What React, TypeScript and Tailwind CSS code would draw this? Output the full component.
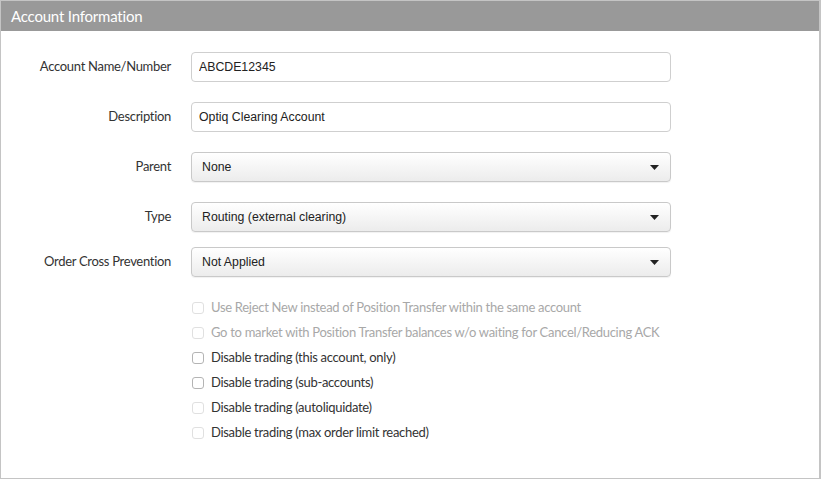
import { ChangeEvent, useState } from 'react';

type Option = { label: string; disabled?: boolean; muted?: boolean };

const checks: Option[] = [
  { label: 'Use Reject New instead of Position Transfer within the same account', disabled: true, muted: true },
  { label: 'Go to market with Position Transfer balances w/o waiting for Cancel/Reducing ACK', disabled: true, muted: true },
  { label: 'Disable trading (this account, only)' },
  { label: 'Disable trading (sub-accounts)' },
  { label: 'Disable trading (autoliquidate)', disabled: true },
  { label: 'Disable trading (max order limit reached)', disabled: true },
];

function Row({ label, children, className = '' }: { label: string; children: React.ReactNode; className?: string }) {
  return (
    <div className={`flex items-center ${className}`}>
      <label className="w-[170px] shrink-0 text-right text-[13px] tracking-[-0.3px] text-[#333]">{label}</label>
      <div className="ml-[20px] w-[480px]">{children}</div>
    </div>
  );
}

function SelectBox({ value }: { value: string }) {
  return (
    <div className="flex h-[30px] items-center justify-between rounded-[4px] border border-[#c9c9c9] bg-gradient-to-b from-white to-[#ececec] pl-[10px] pr-[11px] font-['Liberation_Sans',Arial,sans-serif] text-[12.3px] text-[#222] shadow-[0_1px_1px_rgba(0,0,0,0.06)]">
      <span>{value}</span>
      <svg width="9" height="5" viewBox="0 0 9 5" className="mt-px">
        <path d="M0 0h9L4.5 5z" fill="#222" />
      </svg>
    </div>
  );
}

const inputCls =
  "h-[30px] w-full rounded-[4px] border border-[#cfcfcf] bg-white px-[7px] font-['Liberation_Sans',Arial,sans-serif] text-[12.3px] text-[#222] outline-none";

export default function App() {
  const [name, setName] = useState('ABCDE12345');
  const [desc, setDesc] = useState('Optiq Clearing Account');

  return (
    <div className="h-[479px] w-[821px] bg-white font-['Lato','Noto_Sans',sans-serif]">
      <div className="h-full border border-r-2 border-[#c4c4c4]">
        {/* Panel title */}
        <div className="flex h-[30px] items-center bg-[#999999] pl-[10px] text-[15px] tracking-[-0.2px] text-white">
          Account Information
        </div>

        <div className="pt-[21px]">
          <Row label="Account Name/Number">
            <input
              value={name}
              onChange={(e: ChangeEvent<HTMLInputElement>) => setName(e.target.value)}
              className={inputCls}
            />
          </Row>
          <Row label="Description" className="mt-[20px]">
            <input
              value={desc}
              onChange={(e: ChangeEvent<HTMLInputElement>) => setDesc(e.target.value)}
              className={inputCls}
            />
          </Row>
          <Row label="Parent" className="mt-[20px]">
            <SelectBox value="None" />
          </Row>
          <Row label="Type" className="mt-[20px]">
            <SelectBox value="Routing (external clearing)" />
          </Row>
          <Row label="Order Cross Prevention" className="mt-[15px]">
            <SelectBox value="Not Applied" />
          </Row>

          {/* Flags */}
          <div className="ml-[191px] mt-[18px] flex flex-col">
            {checks.map((c) => (
              <label key={c.label} className="flex h-[25px] items-center gap-[7px] text-[13px] tracking-[-0.3px]">
                <span
                  className={`h-[12px] w-[12px] rounded-[3px] border bg-white ${
                    c.disabled ? 'border-[#e0e0e0]' : 'border-[#b4b4b4]'
                  }`}
                />
                <span className={c.muted ? 'text-[#a8a8a8]' : 'text-[#333]'}>{c.label}</span>
              </label>
            ))}
          </div>
        </div>
      </div>
    </div>
  );
}
